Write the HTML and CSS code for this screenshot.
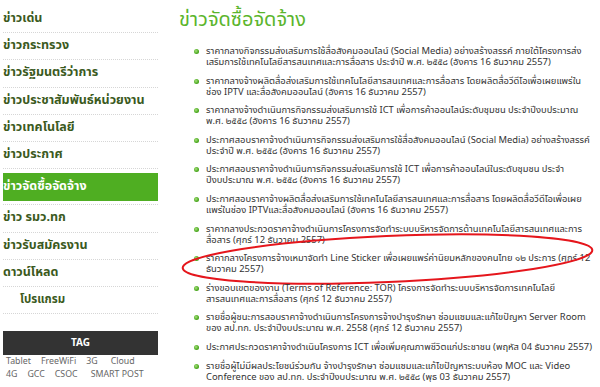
FILE: index.html
```html
<!DOCTYPE html>
<html lang="th">
<head>
  <meta charset="UTF-8" />
  <meta name="viewport" content="width=device-width, initial-scale=1.0" />
  <title>ข่าวจัดซื้อจัดจ้าง</title>
  <link rel="stylesheet" href="styles.css">
</head>
<body>
  <div class="page">
    <aside class="sidebar">
      <ul class="menu">
        <li><a href="#">ข่าวเด่น</a></li>
        <li><a href="#">ข่าวกระทรวง</a></li>
        <li><a href="#">ข่าวรัฐมนตรีว่าการ</a></li>
        <li><a href="#">ข่าวประชาสัมพันธ์หน่วยงาน</a></li>
        <li><a href="#">ข่าวเทคโนโลยี</a></li>
        <li><a href="#">ข่าวประกาศ</a></li>
        <li class="active"><a href="#">ข่าวจัดซื้อจัดจ้าง</a></li>
        <li><a href="#">ข่าว รมว.ทก</a></li>
        <li><a href="#">ข่าวรับสมัครงาน</a></li>
        <li><a href="#">ดาวน์โหลด</a></li>
        <li class="sub"><a href="#">โปรแกรม</a></li>
      </ul>

      <div class="tag-box">
        <div class="tag-title">TAG</div>
        <div class="tags">
          <a href="#">Tablet</a><a href="#">FreeWiFi</a><a href="#">3G</a><a href="#">Cloud</a>
        </div>
        <div class="tags">
          <a href="#">4G</a><a href="#">GCC</a><a href="#">CSOC</a><a href="#">SMART POST</a>
        </div>
      </div>
    </aside>

    <main class="content">
      <h1>ข่าวจัดซื้อจัดจ้าง</h1>
      <ul class="news">
        <li><a href="#">ราคากลางกิจกรรมส่งเสริมการใช้สื่อสังคมออนไลน์ (Social Media) อย่างสร้างสรรค์ ภายใต้โครงการส่งเสริมการใช้เทคโนโลยีสารสนเทศและการสื่อสาร ประจำปี พ.ศ. ๒๕๕๘ (อังคาร 16 ธันวาคม 2557)</a></li>
        <li><a href="#">ราคากลางจ้างผลิตสื่อส่งเสริมการใช้เทคโนโลยีสารสนเทศและการสื่อสาร โดยผลิตสื่อวีดีโอเพื่อเผยแพร่ในช่อง IPTV และสื่อสังคมออนไลน์ (อังคาร 16 ธันวาคม 2557)</a></li>
        <li><a href="#">ราคากลางจ้างดำเนินการกิจกรรมส่งเสริมการใช้ ICT เพื่อการค้าออนไลน์ระดับชุมชน ประจำปีงบประมาณ พ.ศ. ๒๕๕๘ (อังคาร 16 ธันวาคม 2557)</a></li>
        <li><a href="#">ประกาศสอบราคาจ้างดำเนินการกิจกรรมส่งเสริมการใช้สื่อสังคมออนไลน์ (Social Media) อย่างสร้างสรรค์ ประจำปี พ.ศ. ๒๕๕๘ (อังคาร 16 ธันวาคม 2557)</a></li>
        <li><a href="#">ประกาศสอบราคาจ้างดำเนินการกิจกรรมส่งเสริมการใช้ ICT เพื่อการค้าออนไลน์ในระดับชุมชน ประจำปีงบประมาณ พ.ศ. ๒๕๕๘ (อังคาร 16 ธันวาคม 2557)</a></li>
        <li><a href="#">ประกาศสอบราคาจ้างผลิตสื่อส่งเสริมการใช้เทคโนโลยีสารสนเทศและการสื่อสาร โดยผลิตสื่อวีดีโอเพื่อเผยแพร่ในช่อง IPTVและสื่อสังคมออนไลน์ (อังคาร 16 ธันวาคม 2557)</a></li>
        <li><a href="#">ราคากลางประกวดราคาจ้างดำเนินการโครงการจัดทำระบบบริหารจัดการด้านเทคโนโลยีสารสนเทศและการสื่อสาร (ศุกร์ 12 ธันวาคม 2557)</a></li>
        <li class="marked"><a href="#">ราคากลางโครงการจ้างเหมาจัดทำ Line Sticker เพื่อเผยแพร่ค่านิยมหลักของคนไทย ๑๒ ประการ (ศุกร์ 12 ธันวาคม 2557)</a>
          <svg class="circle" viewBox="0 0 415 52"><ellipse cx="207.5" cy="26" rx="205" ry="23" transform="rotate(-2.5 207.5 26)" fill="none" stroke="#e5161c" stroke-width="2"/></svg>
        </li>
        <li><a href="#">ร่างขอบเขตของงาน (Terms of Reference: TOR) โครงการจัดทำระบบบริหารจัดการเทคโนโลยีสารสนเทศและการสื่อสาร (ศุกร์ 12 ธันวาคม 2557)</a></li>
        <li><a href="#">รายชื่อผู้ชนะการสอบราคาจ้างดำเนินการโครงการจ้างบำรุงรักษา ซ่อมแซมและแก้ไขปัญหา Server Room ของ สป.ทก. ประจำปีงบประมาณ พ.ศ. 2558 (ศุกร์ 12 ธันวาคม 2557)</a></li>
        <li><a href="#">ประกาศประกวดราคาจ้างดำเนินโครงการ ICT เพื่อเพิ่มคุณภาพชีวิตแก่ประชาชน (พฤหัส 04 ธันวาคม 2557)</a></li>
        <li><a href="#">รายชื่อผู้ไม่มีผลประโยชน์ร่วมกัน จ้างบำรุงรักษา ซ่อมแซมและแก้ไขปัญหาระบบห้อง MOC และ Video Conference ของ สป.ทก. ประจำปีงบประมาณ พ.ศ. ๒๕๕๘ (พุธ 03 ธันวาคม 2557)</a></li>
      </ul>
    </main>
  </div>
</body>
</html>
```

FILE: styles.css
```css
body { margin: 0; background: #fff; font-family: Tahoma, "Noto Sans Thai", "Noto Sans", "DejaVu Sans", sans-serif; overflow: hidden; }
a { text-decoration: none; color: inherit; }
.page { display: flex; gap: 12px; padding-left: 3px; }

/* sidebar */
.sidebar { width: 155px; flex-shrink: 0; padding-top: 6px; }
.menu { list-style: none; margin: 0; padding: 0; }
.menu li { border-bottom: 1px dotted #d6d6d6; padding: 6px 0; }
.menu li a { display: block; font-size: 12.5px; line-height: 14.2px; font-weight: bold; color: #3b5a1d; white-space: nowrap; }
.menu li.active { padding: 4px 0 3px; }
.menu li.active a { background: #4fae22; color: #fff; padding: 7px 0; }
.menu li.sub a { padding-left: 17px; font-size: 11.5px; }

.tag-box { margin-top: 17px; }
.tag-title { background: #333; color: #fff; font-size: 10px; font-weight: bold; text-align: center; line-height: 24px; }
.tags { display: flex; gap: 10px; padding: 0 3px; font-size: 8.8px; line-height: 13px; color: #666; white-space: nowrap; }
.tags:first-of-type { padding-top: 4px; }
.tags a:last-child { margin-left: 3px; }

/* content */
.content { flex: 1; min-width: 0; padding-right: 8px; }
.content h1 { margin: 6px 0 0; font-size: 20px; line-height: 28px; font-weight: normal; color: #5bb52c; padding-left: 9px; }
.news { list-style: none; margin: 12px 0 0; padding: 0 0 0 36px; }
.news li { position: relative; font-size: 9.4px; line-height: 11px; color: #333; margin-bottom: 7.6px; }
.news li::before { content: ""; position: absolute; left: -12px; top: 3px; width: 5px; height: 5px; border-radius: 50%; background: radial-gradient(circle at 40% 40%, #a7e07e 0, #4ba91e 60%, #3a8d14 100%); }
.news li.marked .circle { position: absolute; left: -26px; top: -20px; width: 415px; height: 52px; pointer-events: none; }
```
